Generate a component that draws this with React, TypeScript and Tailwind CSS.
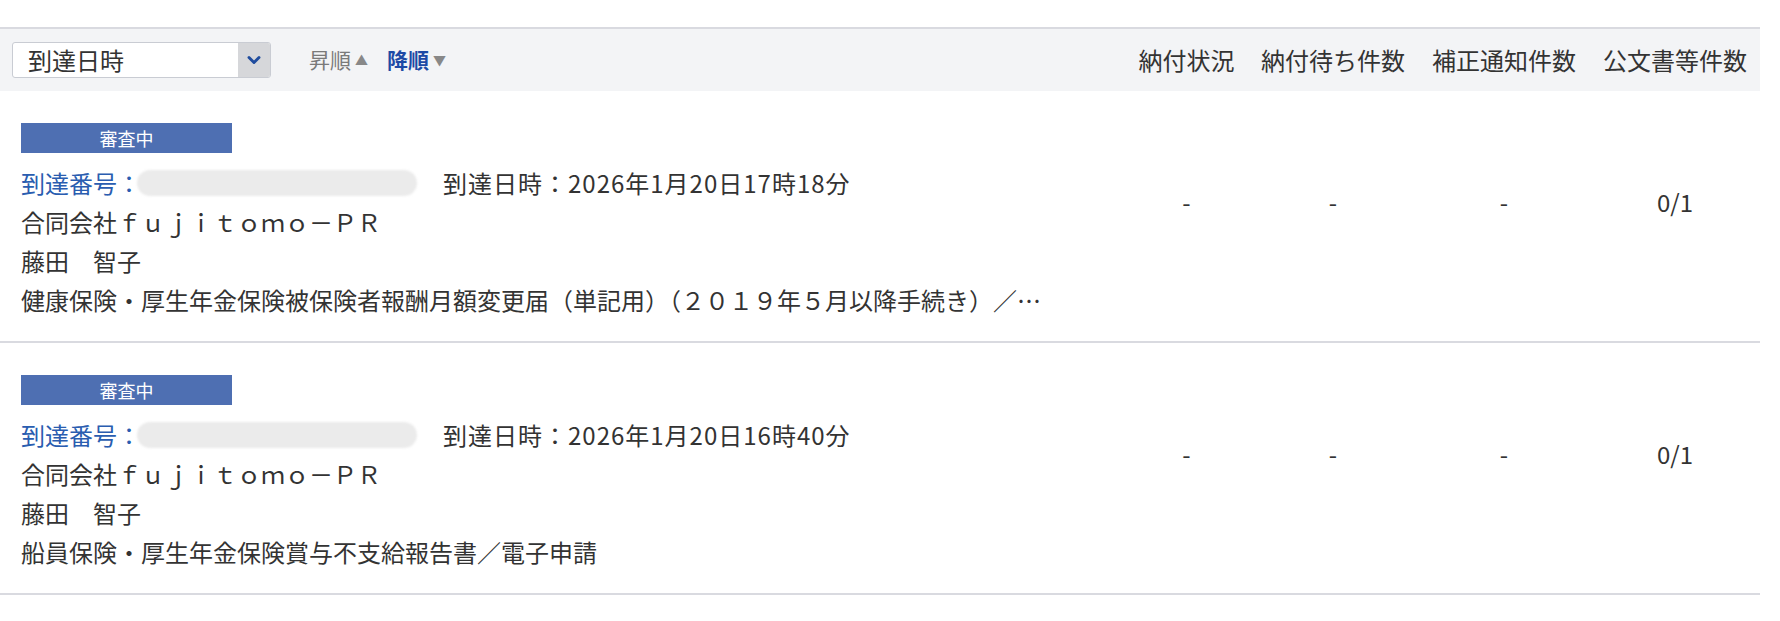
import { ChevronDown } from 'lucide-react';

const rows = [
  {
    status: '審査中',
    arrived: '2026年1月20日17時18分',
    company: '合同会社ｆｕｊｉｔｏｍｏ－ＰＲ',
    person: '藤田　智子',
    title: '健康保険・厚生年金保険被保険者報酬月額変更届（単記用）（２０１９年５月以降手続き）／…',
    values: ['-', '-', '-', '0/1'],
  },
  {
    status: '審査中',
    arrived: '2026年1月20日16時40分',
    company: '合同会社ｆｕｊｉｔｏｍｏ－ＰＲ',
    person: '藤田　智子',
    title: '船員保険・厚生年金保険賞与不支給報告書／電子申請',
    values: ['-', '-', '-', '0/1'],
  },
];

const cols = [
  { label: '納付状況', w: 'w-[123px]' },
  { label: '納付待ち件数', w: 'w-[170px]' },
  { label: '補正通知件数', w: 'w-[172px]' },
  { label: '公文書等件数', w: 'w-[170px]' },
];

const font = { fontFamily: '"Noto Sans CJK JP", "Noto Sans", sans-serif' };

export default function App() {
  return (
    <div className="w-[1780px] h-[621px] bg-white text-[#333]" style={font}>
      <div className="w-[1760px] pt-[27px]">
        {/* sort bar */}
        <div className="h-[64px] border-t-2 border-[#d9dae0] bg-[#f3f4f6] flex items-center">
          <div className="ml-[12px] w-[259px] h-[36px] bg-white border border-[#c9ccd3] rounded-[3px] flex items-stretch overflow-hidden">
            <div className="flex-1 pl-[15px] text-[24px] leading-[34px] text-[#333]">到達日時</div>
            <div className="w-[32px] bg-[#d6d7da] flex items-center justify-center">
              <ChevronDown size={20} strokeWidth={3.5} className="text-[#1f4c9e]" />
            </div>
          </div>
          <div className="ml-[38px] flex items-center text-[21px] text-[#7a7a7a]">
            昇順<span className="ml-[4px] text-[13px] text-[#888]">▲</span>
          </div>
          <div className="ml-[19px] flex items-center text-[21px] font-bold text-[#1d4aa5]">
            降順<span className="ml-[4px] text-[13px] font-normal text-[#888]">▼</span>
          </div>
          <div className="ml-auto flex">
            {cols.map((c) => (
              <div key={c.label} className={`${c.w} text-center text-[24px] text-[#333]`}>
                {c.label}
              </div>
            ))}
          </div>
        </div>

        {rows.map((r, i) => (
          <div key={i} className="flex border-b-2 border-[#d9dae0] h-[252px]">
            <div className="flex-1 pl-[21px] pt-[32px]">
              <div className="w-[211px] h-[30px] bg-[#4e6fb2] text-white text-[18px] leading-[30px] text-center">
                {r.status}
              </div>
              <div className="mt-[10px] text-[24px] leading-[39px] whitespace-nowrap">
                <div className="flex items-center">
                  <span className="text-[#2a5db0]">到達番号：</span>
                  <span className="inline-block w-[280px] h-[26px] -ml-[4px] rounded-full bg-[#ebebeb] blur-[1px]" />
                  <span className="ml-[26px] tracking-[1px]">到達日時：{r.arrived}</span>
                </div>
                <div>{r.company}</div>
                <div>{r.person}</div>
                <div>{r.title}</div>
              </div>
            </div>
            <div className="flex items-center pb-[28px]">
              {r.values.map((v, j) => (
                <div key={j} className={`${cols[j].w} text-center text-[24px] text-[#333]`}>
                  {v}
                </div>
              ))}
            </div>
          </div>
        ))}
      </div>
    </div>
  );
}
